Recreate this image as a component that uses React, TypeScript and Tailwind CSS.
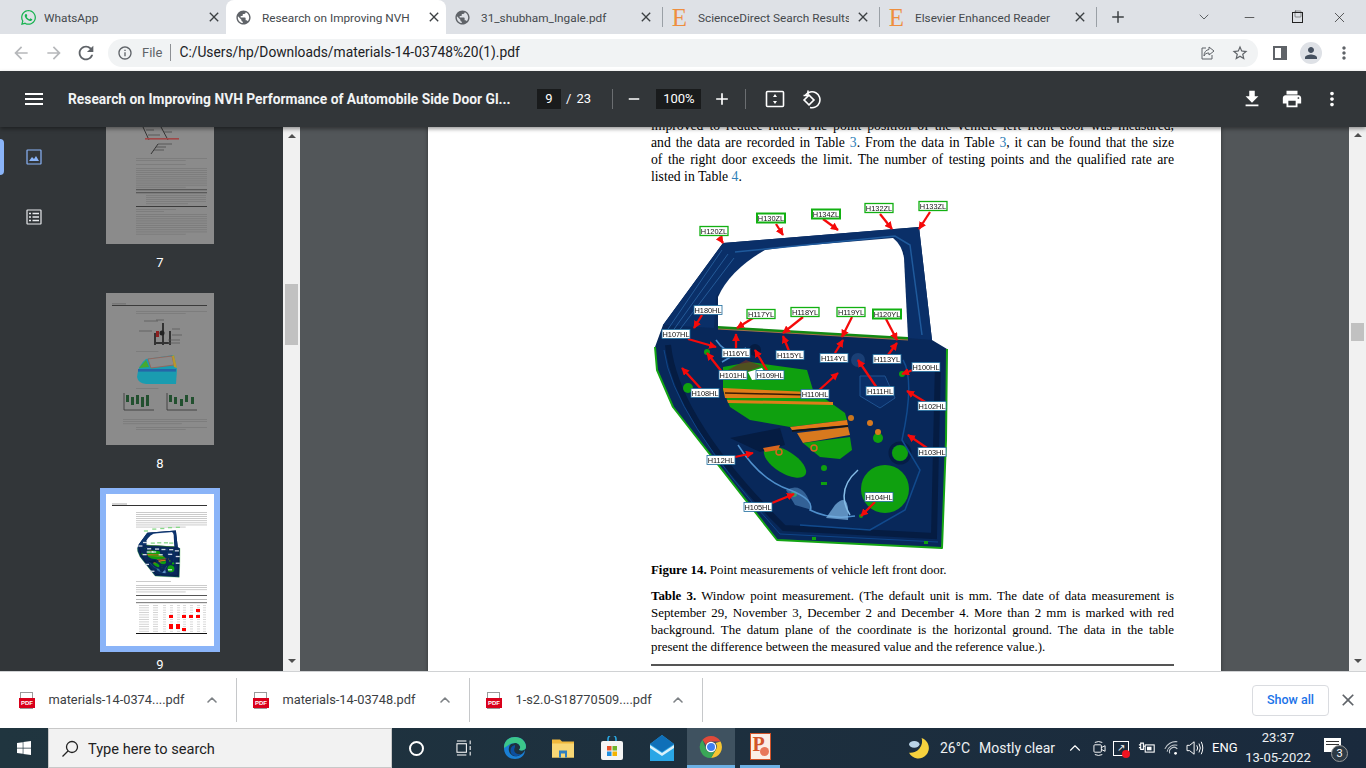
import { ChevronDown, ChevronUp, Minus, Plus, Square, X } from "lucide-react";
import {
  MdAdd,
  MdArrowBack,
  MdArrowForward,
  MdClose,
  MdFileDownload,
  MdInfoOutline,
  MdMenu,
  MdMoreVert,
  MdPerson,
  MdPrint,
  MdPublic,
  MdRefresh,
  MdRemove,
  MdStarBorder,
} from "react-icons/md";
import { FaWhatsapp, FaWindows } from "react-icons/fa";

const UI = "font-['Roboto',sans-serif]";

type Lbl = { t: string; x: number; y: number; green?: boolean; thick?: boolean };
const labels: Lbl[] = [
  { t: "H120ZL", x: 714, y: 231, green: true },
  { t: "H130ZL", x: 771, y: 218, green: true, thick: true },
  { t: "H134ZL", x: 826, y: 214, green: true, thick: true },
  { t: "H132ZL", x: 879, y: 208, green: true },
  { t: "H133ZL", x: 933, y: 206, green: true },
  { t: "H117YL", x: 761, y: 314, green: true },
  { t: "H118YL", x: 805, y: 312, green: true },
  { t: "H119YL", x: 851, y: 312, green: true },
  { t: "H120YL", x: 887, y: 314, green: true, thick: true },
  { t: "H180HL", x: 708, y: 310 },
  { t: "H107HL", x: 676, y: 334 },
  { t: "H116YL", x: 736, y: 353 },
  { t: "H115YL", x: 790, y: 355 },
  { t: "H114YL", x: 834, y: 358 },
  { t: "H113YL", x: 887, y: 359 },
  { t: "H100HL", x: 926, y: 367 },
  { t: "H101HL", x: 733, y: 375 },
  { t: "H109HL", x: 770, y: 375 },
  { t: "H110HL", x: 815, y: 394 },
  { t: "H111HL", x: 880, y: 391 },
  { t: "H108HL", x: 705, y: 393 },
  { t: "H102HL", x: 932, y: 406 },
  { t: "H103HL", x: 932, y: 452 },
  { t: "H112HL", x: 721, y: 460 },
  { t: "H104HL", x: 879, y: 497 },
  { t: "H105HL", x: 758, y: 507 },
];

const arrows = [
  [719, 237, 723, 243],
  [776, 224, 783, 235],
  [823, 219, 838, 230],
  [880, 214, 892, 229],
  [930, 212, 919, 229],
  [702, 315, 694, 328],
  [688, 339, 716, 347],
  [753, 318, 737, 328],
  [803, 317, 783, 333],
  [852, 317, 842, 337],
  [886, 319, 897, 340],
  [736, 350, 736, 334],
  [789, 351, 783, 336],
  [835, 353, 843, 340],
  [888, 355, 897, 343],
  [913, 370, 902, 374],
  [722, 372, 707, 353],
  [768, 372, 755, 350],
  [702, 390, 682, 368],
  [817, 392, 838, 373],
  [877, 388, 858, 360],
  [927, 403, 907, 391],
  [927, 448, 908, 435],
  [735, 457, 753, 453],
  [772, 503, 794, 494],
  [875, 502, 861, 516],
];

function DoorShapes() {
  return (
    <g>
      <path d="M723 243 L919 227 L932 340 L947 349 L946 440 L942 548 L777 540 L673 407 L657 370 L655 347 L663 325 Z" fill="#08285a" />
      <path d="M723 243 L919 227 L932 340 L908 338 L904 250 L760 256 L716 296 L714 328 L663 325 Z" fill="#0a2f68" />
      <path d="M655 347 L657 370 L673 407 L777 540 L942 548 L946 440 L947 349" fill="none" stroke="#14a514" strokeWidth="2" strokeLinejoin="round" />
      <path d="M718 327 L718 297 Q730 270 765 250 L787 247 L893 238 Q902 245 904 258 L908 338 Z" fill="#ffffff" />
      <path d="M718 326 L908 337 L908 340 L718 329 Z" fill="#128a12" />
      <path d="M718 329 L908 340" stroke="#a5714a" strokeWidth="1" />
      <path d="M668 345 Q676 420 784 528 L934 536 L938 362" fill="none" stroke="#051c42" strokeWidth="6" />
      <path d="M664 350 Q672 415 780 534 L938 542" fill="none" stroke="#0f4588" strokeWidth="1" />
      <path d="M723 367 L750 362 L807 370 L813 390 L845 413 L847 420 L790 427 L750 420 L730 407 L723 390 Z" fill="#0fa00f" />
      <path d="M723 388 L810 392 L812 398 L725 398 Z" fill="#de7d18" />
      <path d="M725 393 L811 395" stroke="#3a1c06" strokeWidth="1.5" />
      <path d="M727 400 L833 402 L833 405 L728 403 Z" fill="#de7d18" />
      <path d="M790 427 L847 420 L848 425 L792 430 Z" fill="#e2791a" />
      <path d="M797 433 L848 427 L850 435 L803 443 Z" fill="#d8791e" />
      <path d="M792 431 L848 426" stroke="#1c1206" strokeWidth="1.5" />
      <path d="M803 443 L850 437 L852 450 L840 459 L820 457 Z" fill="#0fa00f" />
      <ellipse cx="785" cy="462" rx="24" ry="11" transform="rotate(32 785 462)" fill="#0fa00f" />
      <circle cx="885" cy="489" r="24" fill="#0fa00f" />
      <circle cx="900" cy="453" r="10" fill="none" stroke="#051d45" strokeWidth="3" />
      <circle cx="900" cy="453" r="8" fill="#0fa00f" />
      <circle cx="878" cy="438" r="5" fill="#0fa00f" />
      <circle cx="878" cy="432" r="3" fill="#d8791e" />
      <circle cx="870" cy="423" r="3" fill="#d8791e" />
      <circle cx="851" cy="418" r="3" fill="#c9761f" />
      <circle cx="779" cy="452" r="3" fill="none" stroke="#d8661e" strokeWidth="1.5" />
      <circle cx="814" cy="448" r="3" fill="none" stroke="#d8661e" strokeWidth="1.5" />
      <circle cx="824" cy="468" r="3" fill="#0fa00f" />
      <rect x="821" y="482" width="6" height="3" fill="#0fa00f" />
      <circle cx="688" cy="388" r="5" fill="#0fa00f" />
      <circle cx="707" cy="352" r="3" fill="#0fa00f" />
      <circle cx="902" cy="374" r="3" fill="#0fa00f" />
      <circle cx="794" cy="494" r="3" fill="#0fa00f" />
      <circle cx="861" cy="516" r="2" fill="#0fa00f" />
      <rect x="812" y="537" width="4" height="3" fill="#0fa00f" />
      <rect x="924" y="541" width="4" height="3" fill="#0fa00f" />
      <circle cx="755" cy="350" r="6" fill="#051c42" />
      <circle cx="858" cy="360" r="7" fill="#1a3f75" />
      <path d="M666 332 L722 250 M672 332 L728 254 M678 332 L734 258" stroke="#245a98" strokeWidth="1" />
      <path d="M735 252 L895 236 L910 245 L922 335" fill="none" stroke="#1f5a9c" strokeWidth="1.5" />
      <path d="M716 340 Q724 352 735 352 M722 362 L746 348" fill="none" stroke="#4c8ecb" strokeWidth="1.5" />
      <path d="M738 445 Q760 480 790 490 Q815 500 810 510 Q830 520 855 516" fill="none" stroke="#4f8fcc" strokeWidth="1.5" />
      <path d="M786 490 Q805 480 812 510 L795 505 Z" fill="#5d9ad2" opacity=".5" />
      <path d="M835 505 Q850 490 848 520 L826 518 Z" fill="#79b2e2" opacity=".75" />
      <path d="M858 470 Q835 490 850 515" fill="none" stroke="#86bde8" strokeWidth="1.5" />
      <path d="M903 360 Q915 380 902 440 L920 470 L905 510 L870 530 L800 525" fill="none" stroke="#114a8d" strokeWidth="1.5" />
      <path d="M860 376 L885 376 L895 398 L880 408 L860 396 Z" fill="#0a2f68" stroke="#1f5290" />
      <path d="M730 438 L780 428 L785 445 L760 452 Z" fill="#051c42" />
      <path d="M763 448 L780 445 L778 450 L765 452 Z" fill="#d8661e" />
      <path d="M748 372 L762 368 L768 378 L752 380 Z" fill="#ffffff" />
      <path d="M728 370 L746 360 L762 366 L746 372 Z" fill="#6c2f28" opacity=".7" />
    </g>
  );
}

function DoorFigure() {
  return (
    <svg viewBox="640 190 320 370" className="block w-[320px] h-[370px] ml-[-11px] mt-[5px] shrink-0 blur-[0.35px]">
      <defs>
        <marker id="head" viewBox="0 0 10 10" refX="9" refY="5" markerWidth="3.4" markerHeight="3.4" orient="auto-start-reverse">
          <path d="M0 0 L10 5 L0 10 Z" fill="#f50a0a" />
        </marker>
      </defs>
      <DoorShapes />
      {arrows.map((a, i) => (
        <line key={i} x1={a[0]} y1={a[1]} x2={a[2]} y2={a[3]} stroke="#f50a0a" strokeWidth="2.3" markerEnd="url(#head)" />
      ))}
      {labels.map((l) => (
        <g key={l.t + l.x}>
          <rect x={l.x - 14} y={l.y - 4.5} width="28" height="9" fill="#fff" stroke={l.green ? "#12b012" : "#1f6d9e"} strokeWidth={l.thick ? 2 : l.green ? 1.3 : 0.8} />
          <text x={l.x} y={l.y + 2.6} textAnchor="middle" fontSize="7.4" fill="#111" fontFamily="Liberation Sans, sans-serif">
            {l.t}
          </text>
        </g>
      ))}
    </svg>
  );
}

function Lines({ x, y, w, n, gap = 2.2, c = "#777777" }: { x: number; y: number; w: number; n: number; gap?: number; c?: string }) {
  return (
    <g>
      {Array.from({ length: n }).map((_, i) => (
        <rect key={i} x={x} y={y + i * gap} width={i === n - 1 ? w * 0.7 : w} height="0.7" fill={c} />
      ))}
    </g>
  );
}

function Thumb7() {
  return (
    <svg viewBox="0 0 108 152" className="block w-[108px] h-[152px] blur-[0.35px]">
      <rect width="108" height="152" fill="#8b8b8b" />
      <path d="M37 35 L43 48 M55 35 L62 48 M52 52 L45 62" stroke="#2a2a2a" strokeWidth="0.9" />
      <rect x="39" y="46" width="34" height="1.6" fill="#a04848" />
      <path d="M40 38 L48 38 M58 40 L66 40 M42 43 L54 43 M52 52 L66 52 M50 55 L60 55 M48 58 L58 58" stroke="#444" strokeWidth="0.7" />
      <Lines x={30} y={66} w={71} n={2} />
      <Lines x={30} y={72} w={71} n={1} />
      <Lines x={30} y={76} w={71} n={10} gap={2.1} />
      <rect x="30" y="97" width="71" height="1.3" fill="#5a5a5a" />
      <rect x="30" y="100" width="71" height="1.3" fill="#5a5a5a" />
      <Lines x={40} y={103} w={60} n={5} gap={2.1} />
      <rect x="30" y="114" width="71" height="0.9" fill="#333" />
      <Lines x={30} y={117} w={40} n={2} />
      <Lines x={30} y={122} w={71} n={10} gap={2.2} />
    </svg>
  );
}

function Thumb8() {
  return (
    <svg viewBox="0 0 108 152" className="block w-[108px] h-[152px] blur-[0.35px]">
      <rect width="108" height="152" fill="#8b8b8b" />
      <rect x="6" y="12" width="95" height="0.9" fill="#333" />
      <rect x="6" y="10.5" width="14" height="0.8" fill="#666" />
      <Lines x={30} y={18} w={71} n={2} />
      <path d="M49 52 L49 40 M57 52 L57 30 M64 52 L64 38 M49 50 L64 50" stroke="#333" strokeWidth="2" />
      <rect x="50" y="38" width="3" height="6" fill="#8e2020" />
      <circle cx="56" cy="40" r="2.5" fill="#222" />
      <path d="M33 38 L46 38 M38 28 L52 28 M50 27 L58 27 M66 36 L74 36 M66 42 L76 42 M62 47 L74 47 M62 50 L74 50" stroke="#555" strokeWidth="0.7" />
      <Lines x={30} y={58} w={32} n={1} />
      <path d="M31 84 Q32 72 40 66 L68 62 L71 76 L70 91 L40 91 Q32 90 31 84 Z" fill="#1a9cb0" />
      <path d="M42 66 L66 63 L68 72 L45 75 Z" fill="#8b8b8b" stroke="#a05d50" strokeWidth="0.8" />
      <path d="M33 75 L40 67 L43 74 Z" fill="#46a92f" />
      <path d="M66 63 L68 62 L71 75 L68 74 Z" fill="#b9962c" />
      <rect x="32" y="76" width="38" height="2.6" fill="#2566a8" />
      <Lines x={30} y={95} w={32} n={1} />
      {[20, 25, 30, 35, 40].map((x, i) => (
        <rect key={x} x={x} y={102 + (i % 2) * 2} width="3" height={7 + i} fill="#22502f" />
      ))}
      {[63, 68, 74, 79, 85].map((x, i) => (
        <rect key={x} x={x} y={102 + (i % 3) * 2} width="3" height={7} fill="#22502f" />
      ))}
      <path d="M18 100 L18 117 L48 117 M61 100 L61 117 L91 117" fill="none" stroke="#333" strokeWidth="0.8" />
      <Lines x={17} y={126} w={84} n={3} />
      <Lines x={30} y={134} w={71} n={2} />
    </svg>
  );
}

function Thumb9() {
  const reds = [
    [90, 115, 4, 3],
    [63, 121, 4, 3],
    [76, 121, 4, 3],
    [83, 121, 4, 3],
    [90, 121, 4, 3],
    [63, 130, 4, 5],
    [70, 130, 4, 5],
    [76, 134, 4, 3],
  ];
  return (
    <svg viewBox="0 0 108 152" className="block w-[108px] h-[152px] blur-[0.3px]">
      <rect width="108" height="152" fill="#fff" />
      <rect x="6" y="11" width="95" height="1" fill="#333" />
      <rect x="6" y="9.5" width="15" height="1" fill="#aaa" />
      <Lines x={30} y={18} w={71} n={8} c="#b5b5b5" gap={2.1} />
      <svg x="29" y="31" width="47" height="54" viewBox="640 190 320 370">
        <DoorShapes />
        {labels.map((l) => (
          <rect key={l.t + l.x} x={l.x - 14} y={l.y - 4.5} width="28" height="9" fill={l.green ? "#88d888" : "#cfd8e3"} />
        ))}
      </svg>
      <Lines x={30} y={87} w={50} n={1} c="#b5b5b5" />
      <Lines x={30} y={91} w={71} n={4} c="#b5b5b5" />
      <rect x="30" y="101" width="71" height="1" fill="#555" />
      <rect x="30" y="105" width="71" height="1" fill="#bbb" />
      <rect x="30" y="108" width="71" height="1.2" fill="#888" />
      {Array.from({ length: 12 }).map((_, r) => (
        <g key={r}>
          <rect x="33" y={111 + r * 2.35} width="10" height="0.9" fill="#cfcfcf" />
          <rect x="47" y={111 + r * 2.35} width="5" height="0.9" fill="#cfcfcf" />
          {[57, 64, 71, 77, 84, 91, 97].map((x) => (
            <rect key={x} x={x} y={111 + r * 2.35} width="3" height="0.9" fill="#d5d5d5" />
          ))}
        </g>
      ))}
      {reds.map((c, i) => (
        <rect key={i} x={c[0]} y={c[1]} width={c[2]} height={c[3]} fill="#f00" />
      ))}
      <rect x="30" y="139" width="71" height="1" fill="#111" />
    </svg>
  );
}

function PageNum({ n, h }: { n: number; h: string }) {
  return <div className={`${h} pt-[10px] text-center text-[13px] leading-[18px] text-white ${UI}`}>{n}</div>;
}

function ScrollArrow({ down }: { down?: boolean }) {
  return (
    <div
      className={
        down
          ? "w-0 h-0 border-x-[4px] border-x-transparent border-t-[4px] border-t-[#505050]"
          : "w-0 h-0 border-x-[4px] border-x-transparent border-b-[4px] border-b-[#505050]"
      }
    />
  );
}

function Tab({ icon, title, active, width, iconW = "w-[34px]", sep = true }: { icon: React.ReactNode; title: string; active?: boolean; width: string; iconW?: string; sep?: boolean }) {
  return (
    <div className={`${width} h-[34px] flex items-center shrink-0 ${active ? "bg-white rounded-t-lg" : ""}`}>
      <div className={`${iconW} flex justify-center shrink-0`}>{icon}</div>
      <span className="flex-1 overflow-hidden whitespace-nowrap text-[11.8px] leading-[18px] pt-[1px] ml-[2px] text-[#45494d]">{title}</span>
      <div className="w-[24px] flex justify-center shrink-0 ml-[2px]">
        <MdClose size={16} className="text-[#3c4043] shrink-0" />
      </div>
      {sep && <div className="w-px h-[20px] bg-[#9aa0a6] ml-[4px] shrink-0" />}
    </div>
  );
}

function Elsevier() {
  return <span className="font-['Liberation_Serif',serif] text-[25px] leading-none text-[#ee8e3e]">E</span>;
}

function PdfIcon() {
  return (
    <div className="relative w-[16px] h-[17px] shrink-0">
      <div className="absolute left-[1px] top-0 w-[13px] h-[17px] bg-white border border-[#9a9a9a]" />
      <div className="absolute left-0 top-[6px] w-[16px] h-[10px] bg-[#d9001b] text-white text-[6px] font-bold leading-[10px] text-center font-['Liberation_Sans',sans-serif]">PDF</div>
    </div>
  );
}

function DownloadItem({ name, width, pad }: { name: string; width: string; pad: string }) {
  return (
    <div className={`${width} h-[44px] flex items-center border-r border-[#c6c8ca] shrink-0`}>
      <div className={pad}>
        <PdfIcon />
      </div>
      <span className="ml-[13.5px] flex-1 text-[12.8px] text-[#3c4043] whitespace-nowrap">{name}</span>
      <ChevronUp size={16} strokeWidth={2.4} className="text-[#7d8185] mr-[16px]" />
    </div>
  );
}

function Line({ children, className = "" }: { children: React.ReactNode; className?: string }) {
  return <div className={`h-[17px] leading-[17px] text-justify [text-align-last:justify] whitespace-nowrap ${className}`}>{children}</div>;
}

function Blue({ children }: { children: React.ReactNode }) {
  return <span className="text-[#2f7fb8]">{children}</span>;
}

function Edge() {
  return (
    <svg viewBox="0 0 24 24" className="w-[24px] h-[24px]">
      <path d="M22 14 C22 20 17 23 12 23 C5 23 1 18 1 12 C1 5 6 1 12 1 C18 1 23 5 23 11 C23 14 19 15 16 14 C19 11 16 7 12 7 C7 7 5 11 6 15 C7 19 11 21 15 20 C18 19 21 17 22 14 Z" fill="#1a7fd4" />
      <path d="M1 12 C1 5 6 1 12 1 C18 1 23 5 23 11 C23 14 19 15 16 14 C19 11 16 7 12 7 C8 7 5 9 1 12 Z" fill="#3cc68a" />
      <path d="M12 11 C10 15 12 19 18 18 C14 22 8 20 7.5 15 C7.3 12 9 9.5 12 9 Z" fill="#0c4fa0" />
    </svg>
  );
}

function Chrome() {
  return (
    <svg viewBox="0 0 24 24" className="w-[24px] h-[24px]">
      <path d="M12 1 A11 11 0 0 1 21.5 6.5 L12 6.5 A5.5 5.5 0 0 0 7 10 L3.5 4.8 A11 11 0 0 1 12 1 Z" fill="#e04a3a" />
      <path d="M21.5 6.5 A11 11 0 0 1 12 23 L16.8 14.8 A5.5 5.5 0 0 0 16.5 8 Z" fill="#f6c531" />
      <path d="M3.5 4.8 A11 11 0 0 0 12 23 L16.8 14.8 A5.5 5.5 0 0 1 7.2 14.8 Z" fill="#3aa757" />
      <circle cx="12" cy="12" r="4.6" fill="#3f7ff0" stroke="#fff" strokeWidth="1.2" />
    </svg>
  );
}

export default function App() {
  return (
    <div className={`w-[1366px] h-[768px] flex flex-col overflow-hidden bg-white ${UI}`}>
      {/* tab strip */}
      <div className="h-[34px] bg-[#dee1e6] flex items-center shrink-0">
        <Tab width="w-[226px]" iconW="w-[42px] pl-[14px]" sep={false} title="WhatsApp" icon={<FaWhatsapp size={17} className="text-[#17b350]" />} />
        <Tab width="w-[220px]" active sep={false} title="Research on Improving NVH" icon={<MdPublic size={17} className="text-[#5f6368]" />} />
        <Tab width="w-[217px]" iconW="w-[33px]" title="31_shubham_Ingale.pdf" icon={<MdPublic size={17} className="text-[#5f6368]" />} />
        <Tab width="w-[217px]" iconW="w-[33px]" title="ScienceDirect Search Results" icon={<Elsevier />} />
        <Tab width="w-[217px]" iconW="w-[33px]" title="Elsevier Enhanced Reader" icon={<Elsevier />} />
        <Plus size={18} strokeWidth={2} className="ml-[12px] text-[#3c4043]" />
        <ChevronDown size={16} strokeWidth={1.2} className="ml-[69px] text-[#3c4043]" />
        <Minus size={15} strokeWidth={1.1} className="ml-[30px] text-[#222]" />
        <div className="ml-[35px] relative w-[11px] h-[11px] border border-[#222] bg-[#dee1e6]">
          <Square size={8} strokeWidth={1.4} className="absolute -top-[3px] left-[1px] text-[#222]" />
        </div>
        <X size={17} strokeWidth={1} className="ml-[28px] text-[#222]" />
      </div>

      {/* address bar */}
      <div className="h-[37px] bg-white flex items-center shrink-0">
        <MdArrowBack size={20} className="ml-[11px] text-[#b6b8bb]" />
        <MdArrowForward size={20} className="ml-[13px] text-[#b6b8bb]" />
        <MdRefresh size={22} className="ml-[11px] text-[#5f6368]" />
        <div className="ml-[11px] w-[1150px] h-[28px] rounded-full bg-[#f1f3f4] flex items-center text-[13px]">
          <MdInfoOutline size={16} className="ml-[9px] text-[#5f6368]" />
          <span className="ml-[9px] text-[#5f6368]">File</span>
          <div className="ml-[8px] w-px h-[17px] bg-[#8d9094]" />
          <span className="ml-[8px] text-[#202124] text-[13.8px]">C:/Users/hp/Downloads/materials-14-03748%20(1).pdf</span>
          <svg viewBox="0 0 16 16" className="ml-auto w-[16px] h-[16px] text-[#5f6368]" fill="none" stroke="currentColor" strokeWidth="1">
            <path d="M6 3 H2 V14 H12 V10" />
            <path d="M9 2 L14 6 L9 10 V8 C6 8 5 9 4 11 C4 7 6 5 9 4.5 Z" />
          </svg>
          <MdStarBorder size={18} className="ml-[15px] mr-[9px] text-[#5f6368]" />
        </div>
        <div className="ml-[15px] w-[14px] h-[14px] border-[2px] border-[#5f6368] border-r-[6px]" />
        <div className="ml-[13px] w-[22px] h-[22px] rounded-full bg-[#dee1e6] flex items-center justify-center">
          <MdPerson size={18} className="text-[#45505f]" />
        </div>
        <MdMoreVert size={20} className="ml-[12px] text-[#5f6368]" />
      </div>

      {/* pdf toolbar */}
      <div className="relative z-10 h-[56px] bg-[#323639] text-white flex items-center shrink-0 shadow-[0_2px_4px_rgba(0,0,0,0.4)]">
        <MdMenu size={24} className="ml-[22px]" />
        <span className="ml-[22px] w-[469px] text-[13.8px] font-bold whitespace-nowrap text-[#f1f3f4]">Research on Improving NVH Performance of Automobile Side Door Gl...</span>
        <div className="w-[24px] h-[20px] bg-[#191b1c] text-center text-[13px] leading-[20px]">9</div>
        <span className="ml-[5px] text-[13px]">/</span>
        <span className="ml-[5px] w-[36px] text-[13px]">23</span>
        <div className="w-px h-[20px] bg-[#6b6e71]" />
        <MdRemove size={18} className="ml-[12px]" />
        <div className="ml-[13px] w-[45px] h-[20px] bg-[#191b1c] text-center text-[13px] leading-[20px]">100%</div>
        <MdAdd size={20} className="ml-[11px]" />
        <div className="ml-[13px] w-px h-[20px] bg-[#6b6e71]" />
        <svg viewBox="0 0 20 20" className="ml-[19px] w-[20px] h-[20px]" fill="none" stroke="#fff" strokeWidth="1.6">
          <rect x="1.5" y="2.5" width="17" height="15" rx="1" />
          <path d="M10 5 L12 8 H8 Z M10 15 L12 12 H8 Z" fill="#fff" stroke="none" />
        </svg>
        <svg viewBox="0 0 20 20" className="ml-[16px] w-[20px] h-[20px]" fill="none" stroke="#fff" strokeWidth="1.6">
          <path d="M4.5 6 A8 8 0 1 1 9 18.5" />
          <path d="M7 1.5 L7 6.5 L2.5 6.5" />
          <rect x="4.5" y="7.5" width="7" height="7" transform="rotate(45 8 11)" />
        </svg>
        <div className="flex-1" />
        <MdFileDownload size={22} />
        <MdPrint size={22} className="ml-[18px]" />
        <MdMoreVert size={22} className="ml-[18px] mr-[23px]" />
      </div>

      {/* content */}
      <div className="h-[544px] flex shrink-0 overflow-hidden">
        <div className="w-[283px] bg-[#323639] flex shrink-0 overflow-hidden">
          <div className="w-[106px] shrink-0 relative pt-[12px] flex flex-col">
            <div className="absolute left-0 top-[12px] w-[4px] h-[36px] bg-[#8ab4f8] rounded-r-sm" />
            <svg viewBox="0 0 16 16" className="ml-[26px] mt-[10px] w-[16px] h-[16px]" fill="none" stroke="#8ab4f8" strokeWidth="1.2">
              <rect x="1" y="1" width="14" height="14" rx="0.5" />
              <path d="M3 12 L6 8 L8 10 L10 7 L13 12 Z" fill="#8ab4f8" stroke="none" />
            </svg>
            <svg viewBox="0 0 16 16" className="ml-[26px] mt-[44px] w-[16px] h-[16px]" fill="none" stroke="#e8eaed" strokeWidth="1.2">
              <rect x="1" y="1" width="14" height="14" rx="0.5" />
              <path d="M3 4.5 H5 M6.5 4.5 H13 M3 8 H5 M6.5 8 H13 M3 11.5 H5 M6.5 11.5 H13" strokeWidth="1.5" />
            </svg>
          </div>
          <div className="w-[108px] shrink-0 mt-[-35px]">
            <Thumb7 />
            <PageNum n={7} h="h-[49px]" />
            <Thumb8 />
            <PageNum n={8} h="h-[43px]" />
            <div className="-mx-[6px] border-[6px] border-[#8ab4f8]">
              <Thumb9 />
            </div>
            <div className={`pt-[4px] text-center text-[13px] leading-[18px] text-white ${UI}`}>9</div>
          </div>
        </div>

        <div className="w-[17px] bg-[#f1f1f1] shrink-0 flex flex-col items-center relative">
          <div className="mt-[7px]">
            <ScrollArrow />
          </div>
          <div className="mt-[146px] w-[13px] h-[61px] bg-[#c1c1c1]" />
          <div className="mt-auto mb-[8px]">
            <ScrollArrow down />
          </div>
        </div>

        <div className="w-[1049px] bg-[#525659] shrink-0 overflow-hidden pl-[128px]">
          <div className="w-[793px] h-[560px] bg-white pl-[223px] pr-[47px] shadow-[0_0_4px_rgba(0,0,0,0.4)] font-['Liberation_Serif',serif] text-black flex flex-col">
            <div className="text-[13.7px] mt-[-10px]">
              <Line>improved to reduce rattle. The point position of the vehicle left front door was measured,</Line>
              <Line>
                and the data are recorded in Table <Blue>3</Blue>. From the data in Table <Blue>3</Blue>, it can be found that the size
              </Line>
              <Line>of the right door exceeds the limit. The number of testing points and the qualified rate are</Line>
              <div className="h-[17px] leading-[17px]">
                listed in Table <Blue>4</Blue>.
              </div>
            </div>
            <DoorFigure />
            <div className="text-[12.9px] leading-[17px] mt-[2px] whitespace-nowrap">
              <b>Figure 14.</b> Point measurements of vehicle left front door.
            </div>
            <div className="text-[12.9px] mt-[9px]">
              <Line>
                <b>Table 3.</b> Window point measurement. (The default unit is mm. The date of data measurement is
              </Line>
              <Line>September 29, November 3, December 2 and December 4. More than 2 mm is marked with red</Line>
              <Line>background. The datum plane of the coordinate is the horizontal ground. The data in the table</Line>
              <div className="h-[17px] leading-[17px] whitespace-nowrap">present the difference between the measured value and the reference value.).</div>
            </div>
            <div className="mt-[8px] h-[2px] bg-[#555]" />
          </div>
        </div>

        <div className="w-[17px] bg-[#f1f1f1] shrink-0 flex flex-col items-center">
          <div className="mt-[6px]">
            <ScrollArrow />
          </div>
          <div className="mt-[186px] w-[13px] h-[18px] bg-[#c1c1c1]" />
          <div className="mt-auto mb-[8px]">
            <ScrollArrow down />
          </div>
        </div>
      </div>

      {/* downloads */}
      <div className="h-[57px] bg-white border-t border-[#d0d2d4] flex items-center shrink-0">
        <DownloadItem width="w-[237px]" pad="ml-[19px]" name="materials-14-0374....pdf" />
        <DownloadItem width="w-[233px]" pad="ml-[16px]" name="materials-14-03748.pdf" />
        <DownloadItem width="w-[233px]" pad="ml-[16px]" name="1-s2.0-S18770509....pdf" />
        <div className="ml-auto w-[77px] h-[31px] rounded border border-[#dadce0] flex items-center justify-center text-[12.5px] font-medium text-[#1a73e8]">Show all</div>
        <MdClose size={20} className="ml-[9px] mr-[8px] text-[#5f6368]" />
      </div>

      {/* taskbar */}
      <div className="h-[40px] bg-gradient-to-r from-[#20353f] to-[#1a2a3d] flex items-stretch shrink-0 text-white">
        <div className="w-[48px] flex items-center justify-center">
          <FaWindows size={16} />
        </div>
        <div className="w-[344px] bg-[#f2f2f2] border border-[#c8c8c8] flex items-center text-[#222] text-[14.6px] leading-[22px] pt-[1px]">
          <svg viewBox="0 0 18 18" className="ml-[12px] w-[18px] h-[18px]" fill="none" stroke="#222" strokeWidth="1.3">
            <circle cx="11" cy="7" r="5.5" />
            <path d="M7 11 L1.5 16.5" />
          </svg>
          <span className="ml-[9px]">Type here to search</span>
        </div>
        <div className="w-[48px] flex items-center justify-center">
          <div className="w-[15px] h-[15px] rounded-full border-[2.5px] border-white" />
        </div>
        <div className="w-[48px] flex items-center justify-center">
          <svg viewBox="0 0 18 18" className="w-[17px] h-[18px]" fill="none" stroke="#fff" strokeWidth="1.1">
            <rect x="1" y="4.5" width="10" height="9" />
            <path d="M1 1.5 H11 M1 16.5 H11 M15 1 V5 M15 7 V11 M15 13 V17" />
          </svg>
        </div>
        <div className="w-[54px] flex items-center justify-center">
          <Edge />
        </div>
        <div className="w-[42px] flex items-center justify-center">
          <svg viewBox="0 0 22 20" className="w-[22px] h-[21px]">
            <path d="M0 1 H8 L10 3 H22 V19 H0 Z" fill="#f0b83c" />
            <rect x="0" y="5" width="22" height="14" fill="#f8d775" />
            <rect x="7" y="12" width="8" height="7" fill="#2f7fc1" />
            <rect x="9" y="15" width="4" height="4" fill="#f8d775" />
          </svg>
        </div>
        <div className="w-[56px] flex items-center justify-center">
          <svg viewBox="0 0 22 24" className="w-[22px] h-[24px]">
            <path d="M7 6 V3 A4 4 0 0 1 15 3 V6" fill="none" stroke="#2aa6e0" strokeWidth="1.6" />
            <rect x="0" y="5" width="22" height="19" rx="2" fill="#f5f5f5" />
            <rect x="6" y="10" width="4.5" height="4.5" fill="#e8512a" />
            <rect x="11.5" y="10" width="4.5" height="4.5" fill="#6fb52c" />
            <rect x="6" y="15.5" width="4.5" height="4.5" fill="#1f8fe0" />
            <rect x="11.5" y="15.5" width="4.5" height="4.5" fill="#f4b400" />
          </svg>
        </div>
        <div className="w-[44px] flex items-center justify-center">
          <svg viewBox="0 0 24 28" className="w-[24px] h-[28px]">
            <path d="M0 10 L12 1 L24 10 V27 H0 Z" fill="#2aa6e6" />
            <path d="M0 10 L12 1 L24 10 L12 18 Z" fill="#0f6fb8" />
            <path d="M0 11 L12 19 L24 11 V14 L12 22 L0 14 Z" fill="#d9f1fb" />
          </svg>
        </div>
        <div className="w-[48px] bg-[#3f5260] border-b-[3px] border-[#6cb0e4] flex items-center justify-center ml-[3px]">
          <Chrome />
        </div>
        <div className="ml-[5px] w-[40px] border-b-[3px] border-[#6cb0e4] flex items-center justify-center">
          <div className="relative w-[21px] h-[27px] bg-[#fbeee6] border border-[#d2542a]">
            <span className="absolute left-[2px] top-[-2px] text-[#d2542a] text-[20px] font-bold font-['Liberation_Serif',serif] leading-[24px]">P</span>
            <div className="absolute right-[1px] bottom-[3px] w-[9px] h-[9px] rounded-full bg-[#e8775a]" />
          </div>
        </div>
        <div className="w-[151px] flex items-center justify-end">
          <svg viewBox="0 0 22 22" className="w-[23px] h-[23px]">
            <path d="M13 1 A10 10 0 1 1 1 15 A11 11 0 0 0 13 1 Z" fill="#f7d23e" />
            <ellipse cx="6" cy="7" rx="5" ry="3.2" fill="#b9d3e6" />
          </svg>
        </div>
        <span className="ml-[9px] self-center text-[14px] w-[30px] whitespace-nowrap text-[#eef1f3]">26°C</span>
        <span className="ml-[9px] self-center w-[84px] text-[14px] whitespace-nowrap text-[#eef1f3]">Mostly clear</span>
        <ChevronUp size={18} className="self-center ml-[3px]" strokeWidth={1.5} />
        <svg viewBox="0 0 14 18" className="self-center ml-[9px] w-[13px] h-[17px]" fill="none" stroke="#fff" strokeWidth="1">
          <rect x="1" y="5" width="8" height="8" rx="1" />
          <path d="M9 8 L13 6 V12 L9 10 M2 2.5 Q6 0.5 10 2.5 M2 15.5 Q6 17.5 10 15.5" />
        </svg>
        <div className="self-center ml-[7px] relative w-[16px] h-[15px] border border-white">
          <span className="absolute left-[3px] top-[-1px] text-[10px] leading-[14px]">↗</span>
          <div className="absolute -right-[2px] -bottom-[3px] w-[8px] h-[8px] rounded-full bg-[#f01421]" />
        </div>
        <svg viewBox="0 0 20 14" className="self-center ml-[9px] w-[18px] h-[13px]" fill="none" stroke="#fff" strokeWidth="1.2">
          <path d="M1 3 H3 M1 6 H3 M3 1 H6 V8 H3 Z M6 4.5 H8" />
          <rect x="8" y="3" width="10" height="8" />
          <rect x="10" y="5" width="5" height="4" fill="#fff" stroke="none" />
        </svg>
        <svg viewBox="0 0 18 18" className="self-center ml-[8px] w-[16px] h-[16px]" fill="none" stroke="#c6ccd1" strokeWidth="1.2">
          <path d="M1 10 A13 13 0 0 1 15 2 M3.5 13 A9 9 0 0 1 15 6 M6.5 15 A5 5 0 0 1 15 10" />
          <circle cx="13" cy="15" r="1.6" fill="#fff" stroke="none" />
        </svg>
        <svg viewBox="0 0 20 18" className="self-center ml-[6px] w-[18px] h-[16px]" fill="none" stroke="#fff" strokeWidth="1.1">
          <path d="M1 6 H4 L9 2 V16 L4 12 H1 Z M12 6 Q14 9 12 12 M14.5 4 Q17.5 9 14.5 14 M17 2 Q20.5 9 17 16" />
        </svg>
        <span className="self-center ml-[8px] text-[13px] w-[26px]">ENG</span>
        <div className="ml-[4px] w-[72px] flex flex-col items-center justify-center text-[13px] leading-[20px] text-[#eef1f3]">
          <span>23:37</span>
          <span className="whitespace-nowrap">13-05-2022</span>
        </div>
        <div className="ml-[2px] relative w-[30px]">
          <div className="absolute left-[8px] top-[10px] w-[17px] h-[14px] bg-white flex flex-col gap-[2px] pt-[3px] px-[2px]">
            <div className="h-px bg-[#333]" />
            <div className="h-px bg-[#333]" />
          </div>
          <div className="absolute left-[15px] top-[17px] w-[17px] h-[17px] rounded-full bg-[#2d3a45] border border-[#999] text-[11px] leading-[15px] text-center">3</div>
        </div>
      </div>
    </div>
  );
}
